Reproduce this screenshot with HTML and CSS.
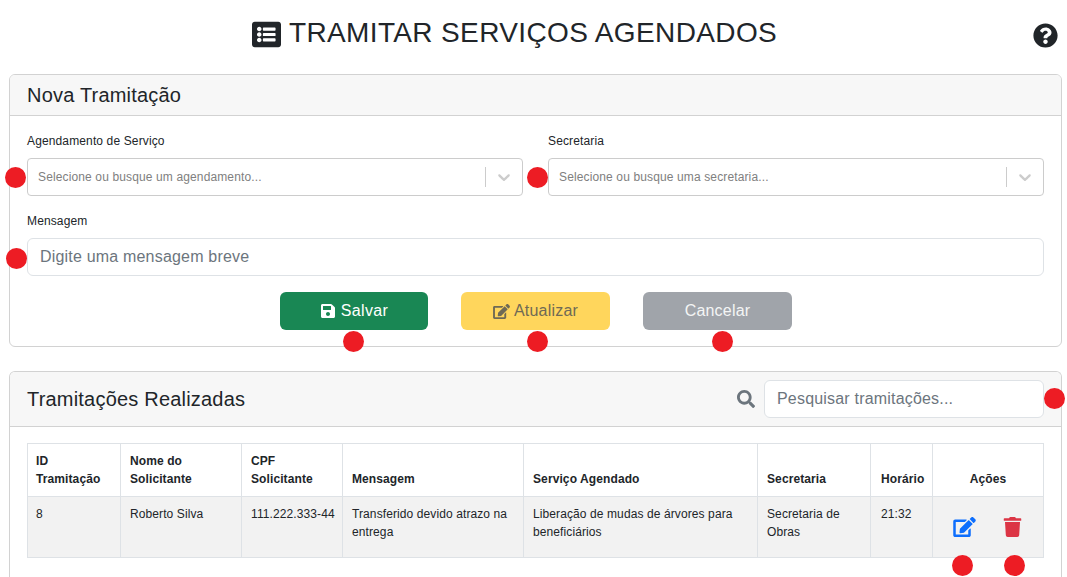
FILE: index.html
```html
<!DOCTYPE html>
<html lang="pt-BR">
<head>
<meta charset="utf-8">
<title>Tramitar Serviços Agendados</title>
<link rel="stylesheet" href="styles.css">
</head>
<body>
<header class="page-head">
  <h1 class="page-title">
    <svg class="title-icon" viewBox="0 0 512 512"><path d="M464 480H48c-26.51 0-48-21.49-48-48V80c0-26.51 21.49-48 48-48h416c26.51 0 48 21.49 48 48v352c0 26.51-21.49 48-48 48zM128 120c-22.091 0-40 17.909-40 40s17.909 40 40 40 40-17.909 40-40-17.909-40-40-40zm0 96c-22.091 0-40 17.909-40 40s17.909 40 40 40 40-17.909 40-40-17.909-40-40-40zm0 96c-22.091 0-40 17.909-40 40s17.909 40 40 40 40-17.909 40-40-17.909-40-40-40zm288-136v-32c0-6.627-5.373-12-12-12H204c-6.627 0-12 5.373-12 12v32c0 6.627 5.373 12 12 12h200c6.627 0 12-5.373 12-12zm0 96v-32c0-6.627-5.373-12-12-12H204c-6.627 0-12 5.373-12 12v32c0 6.627 5.373 12 12 12h200c6.627 0 12-5.373 12-12zm0 96v-32c0-6.627-5.373-12-12-12H204c-6.627 0-12 5.373-12 12v32c0 6.627 5.373 12 12 12h200c6.627 0 12-5.373 12-12z"/></svg>
    <span>TRAMITAR SERVIÇOS AGENDADOS</span>
  </h1>
  <svg class="help-icon" viewBox="0 0 512 512"><path d="M504 256c0 136.997-111.043 248-248 248S8 392.997 8 256C8 119.083 119.043 8 256 8s248 111.083 248 248zM262.655 90c-54.497 0-89.255 22.957-116.549 63.758-3.536 5.286-2.353 12.415 2.715 16.258l34.699 26.31c5.205 3.947 12.621 3.008 16.665-2.122 17.864-22.658 30.113-35.797 57.303-35.797 20.429 0 45.698 13.148 45.698 32.958 0 14.976-12.363 22.667-32.534 33.976C247.128 238.528 216 254.941 216 296v4c0 6.627 5.373 12 12 12h56c6.627 0 12-5.373 12-12v-1.333c0-28.462 83.186-29.647 83.186-106.667 0-58.002-60.165-102-116.531-102zM256 338c-25.365 0-46 20.635-46 46 0 25.364 20.635 46 46 46s46-20.636 46-46c0-25.365-20.635-46-46-46z"/></svg>
</header>

<section class="card">
  <h2 class="card-head">Nova Tramitação</h2>
  <div class="card-body">
    <div class="form-row">
      <div class="field">
        <label class="label">Agendamento de Serviço</label>
        <div class="select">
          <span class="dot dot-left"></span>
          <span class="select-text">Selecione ou busque um agendamento...</span>
          <span class="select-sep"></span>
          <svg class="chevron" viewBox="0 0 20 20"><path d="M4.516 7.548c0.436-0.446 1.043-0.481 1.576 0l3.908 3.747 3.908-3.747c0.533-0.481 1.141-0.446 1.574 0 0.436 0.445 0.408 1.197 0 1.615-0.406 0.418-4.695 4.502-4.695 4.502-0.217 0.223-0.502 0.335-0.787 0.335s-0.57-0.112-0.789-0.335c0 0-4.287-4.084-4.695-4.502s-0.436-1.17 0-1.615z"/></svg>
        </div>
      </div>
      <div class="field">
        <label class="label">Secretaria</label>
        <div class="select">
          <span class="dot dot-left dot-left-2"></span>
          <span class="select-text">Selecione ou busque uma secretaria...</span>
          <span class="select-sep"></span>
          <svg class="chevron" viewBox="0 0 20 20"><path d="M4.516 7.548c0.436-0.446 1.043-0.481 1.576 0l3.908 3.747 3.908-3.747c0.533-0.481 1.141-0.446 1.574 0 0.436 0.445 0.408 1.197 0 1.615-0.406 0.418-4.695 4.502-4.695 4.502-0.217 0.223-0.502 0.335-0.787 0.335s-0.57-0.112-0.789-0.335c0 0-4.287-4.084-4.695-4.502s-0.436-1.17 0-1.615z"/></svg>
        </div>
      </div>
    </div>
    <div class="field field-wide">
      <label class="label">Mensagem</label>
      <div class="input-wrap">
        <span class="dot dot-message"></span>
        <input class="input" type="text" placeholder="Digite uma mensagem breve">
      </div>
    </div>
    <div class="actions">
      <button class="btn btn-green" type="button">
        <svg class="btn-icon" viewBox="0 0 448 512"><path d="M433.941 129.941l-83.882-83.882A48 48 0 0 0 316.118 32H48C21.49 32 0 53.49 0 80v352c0 26.51 21.49 48 48 48h352c26.51 0 48-21.49 48-48V163.882a48 48 0 0 0-14.059-33.941zM224 416c-35.346 0-64-28.654-64-64 0-35.346 28.654-64 64-64s64 28.654 64 64c0 35.346-28.654 64-64 64zm96-304.52V212c0 6.627-5.373 12-12 12H76c-6.627 0-12-5.373-12-12V108c0-6.627 5.373-12 12-12h228.52c3.183 0 6.235 1.264 8.485 3.515l3.48 3.48A11.996 11.996 0 0 1 320 111.48z"/></svg>
        Salvar<span class="dot dot-below dot-save"></span>
      </button>
      <button class="btn btn-yellow" type="button">
        <svg class="btn-icon btn-icon-wide" viewBox="0 0 576 512"><path d="M402.6 83.2l90.2 90.2c3.8 3.8 3.8 10 0 13.8L274.4 405.6l-92.8 10.3c-12.4 1.4-22.9-9.1-21.5-21.5l10.3-92.8L388.8 83.2c3.8-3.8 10-3.8 13.8 0zm162-22.9l-48.8-48.8c-15.2-15.2-39.9-15.2-55.2 0l-35.4 35.4c-3.8 3.8-3.8 10 0 13.8l90.2 90.2c3.8 3.8 10 3.8 13.8 0l35.4-35.4c15.2-15.3 15.2-40 0-55.2zM384 346.2V448H64V128h229.8c3.2 0 6.2-1.3 8.5-3.5l40-40c7.6-7.6 2.2-20.5-8.5-20.5H48C21.5 64 0 85.5 0 112v352c0 26.5 21.5 48 48 48h352c26.5 0 48-21.5 48-48V306.2c0-10.7-12.9-16-20.5-8.5l-40 40c-2.2 2.3-3.5 5.3-3.5 8.5z"/></svg>
        Atualizar<span class="dot dot-below dot-update"></span>
      </button>
      <button class="btn btn-gray" type="button">Cancelar<span class="dot dot-below dot-cancel"></span></button>
    </div>
  </div>
</section>

<section class="card card-list">
  <div class="card-head card-head-search">
    <h2 class="card-title">Tramitações Realizadas</h2>
    <div class="search">
      <svg class="search-icon" viewBox="0 0 512 512"><path d="M505 442.7L405.3 343c-4.5-4.5-10.6-7-17-7H372c27.6-35.3 44-79.7 44-128C416 93.1 322.9 0 208 0S0 93.1 0 208s93.1 208 208 208c48.3 0 92.7-16.4 128-44v16.3c0 6.4 2.5 12.5 7 17l99.7 99.7c9.4 9.4 24.6 9.4 33.9 0l28.3-28.3c9.4-9.4 9.4-24.6.1-34zM208 336c-70.7 0-128-57.2-128-128 0-70.7 57.2-128 128-128 70.7 0 128 57.2 128 128 0 70.7-57.2 128-128 128z"/></svg>
      <div class="input-wrap search-wrap">
        <input class="input" type="text" placeholder="Pesquisar tramitações...">
        <span class="dot dot-right"></span>
      </div>
    </div>
  </div>
  <div class="card-body">
    <table class="table">
      <colgroup>
        <col class="c1"><col class="c2"><col class="c3"><col class="c4"><col class="c5"><col class="c6"><col class="c7"><col class="c8">
      </colgroup>
      <thead>
        <tr>
          <th>ID Tramitação</th>
          <th>Nome do Solicitante</th>
          <th>CPF Solicitante</th>
          <th>Mensagem</th>
          <th>Serviço Agendado</th>
          <th>Secretaria</th>
          <th class="time">Horário</th>
          <th class="center">Ações</th>
        </tr>
      </thead>
      <tbody>
        <tr>
          <td>8</td>
          <td>Roberto Silva</td>
          <td>111.222.333-44</td>
          <td>Transferido devido atrazo na entrega</td>
          <td>Liberação de mudas de árvores para beneficiários</td>
          <td>Secretaria de Obras</td>
          <td class="time">21:32</td>
          <td class="cell-actions">
            <div class="row-actions">
              <span class="row-action">
                <svg class="icon-edit" viewBox="0 0 576 512"><path d="M402.6 83.2l90.2 90.2c3.8 3.8 3.8 10 0 13.8L274.4 405.6l-92.8 10.3c-12.4 1.4-22.9-9.1-21.5-21.5l10.3-92.8L388.8 83.2c3.8-3.8 10-3.8 13.8 0zm162-22.9l-48.8-48.8c-15.2-15.2-39.9-15.2-55.2 0l-35.4 35.4c-3.8 3.8-3.8 10 0 13.8l90.2 90.2c3.8 3.8 10 3.8 13.8 0l35.4-35.4c15.2-15.3 15.2-40 0-55.2zM384 346.2V448H64V128h229.8c3.2 0 6.2-1.3 8.5-3.5l40-40c7.6-7.6 2.2-20.5-8.5-20.5H48C21.5 64 0 85.5 0 112v352c0 26.5 21.5 48 48 48h352c26.5 0 48-21.5 48-48V306.2c0-10.7-12.9-16-20.5-8.5l-40 40c-2.2 2.3-3.5 5.3-3.5 8.5z"/></svg>
                <span class="dot dot-under dot-edit"></span>
              </span>
              <span class="row-action">
                <svg class="icon-trash" viewBox="0 0 448 512"><path d="M432 32H312l-9.4-18.7A24 24 0 0 0 281.1 0H166.8a23.72 23.72 0 0 0-21.4 13.3L136 32H16A16 16 0 0 0 0 48v32a16 16 0 0 0 16 16h416a16 16 0 0 0 16-16V48a16 16 0 0 0-16-16zM53.2 467a48 48 0 0 0 47.9 45h245.8a48 48 0 0 0 47.9-45L416 128H32z"/></svg>
                <span class="dot dot-under dot-delete"></span>
              </span>
            </div>
          </td>
        </tr>
      </tbody>
    </table>
  </div>
</section>
</body>
</html>
```

FILE: styles.css
```css
* { box-sizing: border-box; }
html, body { height: 100%; }
body {
  margin: 0;
  padding: 0 5px 0 9px;
  height: 577px;
  overflow: hidden;
  background: #fff;
  color: #212529;
  font-family: "Liberation Sans", Arial, sans-serif;
  font-size: 12px;
  letter-spacing: 0.13px;
}
.page-head {
  height: 74px;
  position: relative;
  display: flex;
  justify-content: center;
}
.page-title {
  margin: 16px 0 0;
  height: 34px;
  display: flex;
  align-items: center;
  gap: 8px;
  font-size: 28px;
  font-weight: 400;
  line-height: 34px;
  letter-spacing: 0.37px;
  padding-right: 42px;
}
.title-icon { width: 29px; height: 29px; fill: #212529; margin-top: 2px; }
.help-icon {
  position: absolute;
  right: 4px;
  top: 23px;
  width: 25px;
  height: 25px;
  fill: #212529;
}
.card {
  border: 1px solid #d2d2d2;
  border-radius: 6px;
  height: 273px;
}
.card-list { margin-top: 24px; height: 206px; border-bottom: 0; border-radius: 6px 6px 0 0; }
.card-head {
  margin: 0;
  height: 41px;
  padding: 0 17px;
  background: #f7f7f7;
  border-bottom: 1px solid #d2d2d2;
  border-radius: 5px 5px 0 0;
  font-size: 20px;
  font-weight: 400;
  line-height: 40px;
  letter-spacing: 0.2px;
}
.card-head-search {
  height: 55px;
  display: flex;
  align-items: center;
  justify-content: space-between;
}
.card-title { margin: 0; font-size: 20px; font-weight: 400; }
.card-body { padding: 16px 17px; }
.form-row { display: grid; grid-template-columns: 496px 496px; column-gap: 25px; }
.label { display: block; height: 26px; line-height: 18px; }
.field-wide { margin-top: 16px; }
.select {
  position: relative;
  height: 38px;
  display: flex;
  align-items: center;
  border: 1px solid #ccc;
  border-radius: 4px;
  padding-left: 10px;
  background: #fff;
}
.select-text { flex: 1; color: #808080; }
.select-sep { width: 1px; height: 20px; background: #ccc; }
.chevron { width: 20px; height: 20px; fill: #ccc; margin: 0 8px; }
.input-wrap { position: relative; }
.input {
  display: block;
  width: 100%;
  height: 38px;
  padding: 0 12px;
  border: 1px solid #dee2e6;
  border-radius: 6px;
  background: #fff;
  font: 16px "Liberation Sans", Arial, sans-serif;
  letter-spacing: 0.19px;
  color: #212529;
}
.input::placeholder { color: #6c757d; opacity: 1; }
.actions {
  display: flex;
  justify-content: center;
  gap: 33px;
  margin-top: 16px;
  padding-left: 1px;
}
.btn {
  position: relative;
  width: 149px;
  height: 38px;
  border: 0;
  border-radius: 6px;
  display: flex;
  align-items: center;
  justify-content: center;
  gap: 4px;
  font: 16px "Liberation Sans", Arial, sans-serif;
  letter-spacing: 0.2px;
  padding: 0;
}
.btn-green { width: 148px; gap: 6px; padding-left: 7px; letter-spacing: 0.33px; background: #198754; color: #fff; }
.btn-yellow { padding-left: 4px; background: #ffd65c; color: #6f6a55; }
.btn-gray { background: #a0a4aa; color: #f4f5f5; }
.btn-icon { width: 14px; height: 16px; fill: currentColor; }
.btn-icon-wide { width: 17px; height: 15px; }
.dot {
  position: absolute;
  width: 21px;
  height: 21px;
  border-radius: 50%;
  background: #ed1c24;
}
.dot-left { left: -23px; top: 8px; }
.dot-left-2 { left: -22px; }
.dot-message { left: -21px; top: 10px; }
.dot-right { right: -21px; top: 8px; }
.dot-below { top: 39px; }
.dot-save { left: 63px; }
.dot-update { left: 66px; }
.dot-cancel { left: 69px; }
.dot-under { top: 38px; }
.dot-edit { left: -1px; }
.dot-delete { left: 1px; }
.search { display: flex; align-items: center; gap: 9px; }
.search-icon { width: 18px; height: 18px; fill: #6c757d; }
.search-wrap { width: 280px; }
.table {
  width: 1016px;
  border-collapse: collapse;
  table-layout: fixed;
  line-height: 18px;
  letter-spacing: 0.1px;
}
.c1 { width: 93px; }
.c2 { width: 121px; }
.c3 { width: 101px; }
.c4 { width: 181px; }
.c5 { width: 234px; }
.c6 { width: 113px; }
.c7 { width: 62px; }
.c8 { width: 111px; }
.table th, .table td {
  border: 1px solid #dee2e6;
  padding: 8px 6px 8px 9px;
  vertical-align: top;
  text-align: left;
}
.table th:first-child, .table td:first-child { padding-left: 8px; }
.table th { vertical-align: bottom; font-weight: 700; background: #fff; }
.table td { background: #f2f2f2; height: 61px; }
.table .time { padding-left: 10px; padding-right: 4px; }
.table .center { text-align: center; padding-left: 8px; padding-right: 8px; }
.row-actions { display: flex; justify-content: center; gap: 27px; padding: 12px 4px 0 0; }
.row-action { position: relative; display: block; height: 20px; line-height: 0; }
.icon-edit { width: 23px; height: 20px; fill: #0d6efd; }
.icon-trash { width: 19px; height: 20px; fill: #dc3545; }
```
